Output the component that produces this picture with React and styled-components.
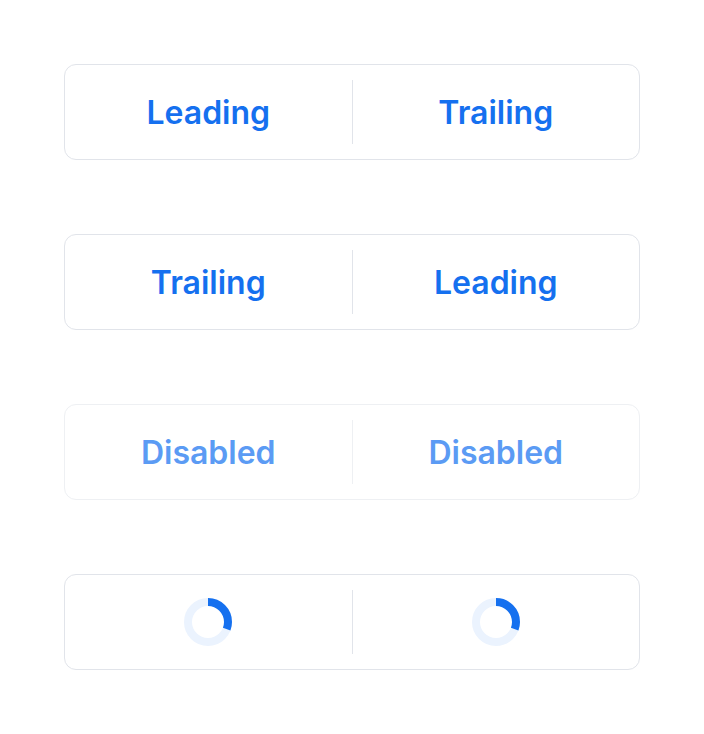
import React from "react";
import styled, { createGlobalStyle } from "styled-components";

const Global = createGlobalStyle`
  html, body { margin: 0; padding: 0; background: #ffffff; }
  body { font-family: Inter, "Noto Sans", sans-serif; }
`;

const Page = styled.div`
  display: flex;
  flex-direction: column;
  gap: 74px;
  padding: 64px;
  width: 576px;
`;

const Group = styled.div`
  display: flex;
  align-items: center;
  height: 96px;
  box-sizing: border-box;
  border: 1px solid ${(p) => (p.$disabled ? "#eef0f3" : "#e1e4ea")};
  border-radius: 12px;
  background: #fff;
`;

const Segment = styled.button`
  flex: 1;
  height: 100%;
  display: flex;
  align-items: center;
  justify-content: center;
  border: none;
  background: transparent;
  padding: 0;
  font-family: Inter, "Noto Sans", sans-serif;
  font-size: 32px;
  font-weight: 600;
  color: ${(p) => (p.disabled ? "#5b9bf4" : "#1570ef")};
  cursor: ${(p) => (p.disabled ? "default" : "pointer")};
`;

const Divider = styled.div`
  width: 1px;
  height: 64px;
  background: ${(p) => (p.$disabled ? "#eef0f3" : "#e1e4ea")};
`;

const Spinner = () => (
  <svg width="48" height="48" viewBox="0 0 48 48">
    <circle cx="24" cy="24" r="20" fill="none" stroke="#ebf3fe" strokeWidth="8" />
    <circle
      cx="24"
      cy="24"
      r="20"
      fill="none"
      stroke="#1570ef"
      strokeWidth="8"
      strokeDasharray="38.5 200"
      transform="rotate(-90 24 24)"
    />
  </svg>
);

const Row = ({ left, right, disabled }) => (
  <Group $disabled={disabled}>
    <Segment disabled={disabled}>{left}</Segment>
    <Divider $disabled={disabled} />
    <Segment disabled={disabled}>{right}</Segment>
  </Group>
);

export default function App() {
  return (
    <>
      <Global />
      <Page>
        <Row left="Leading" right="Trailing" />
        <Row left="Trailing" right="Leading" />
        <Row left="Disabled" right="Disabled" disabled />
        <Row left={<Spinner />} right={<Spinner />} />
      </Page>
    </>
  );
}
